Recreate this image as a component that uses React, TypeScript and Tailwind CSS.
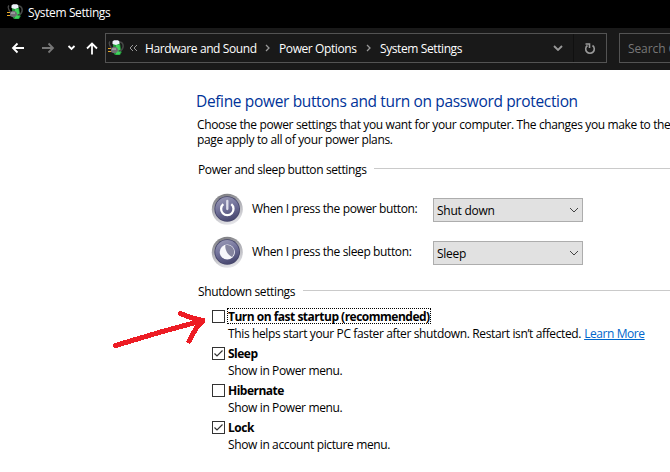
import { useState } from "react";
import clsx from "clsx";

const CRUMBS = [
  { label: "Hardware and Sound", width: "w-[111px]" },
  { label: "Power Options", width: "w-[78px]" },
  { label: "System Settings", width: "w-[84px]" },
];

const SHUTDOWN_OPTIONS = [
  {
    id: "fast",
    label: "Turn on fast startup (recommended)",
    hint: "This helps start your PC faster after shutdown. Restart isn’t affected.",
    link: "Learn More",
  },
  { id: "sleep", label: "Sleep", hint: "Show in Power menu." },
  { id: "hibernate", label: "Hibernate", hint: "Show in Power menu." },
  { id: "lock", label: "Lock", hint: "Show in account picture menu." },
];

function BatteryIcon() {
  return (
    <svg width="16" height="16" viewBox="0 0 16 16" className="shrink-0" aria-hidden>
      <path d="M3.500 8C1 5 .5 3 2 1.500" fill="none" stroke="#4a4a4a" strokeWidth="1.300" />
      <path d="M5 3.500h7l1.500 9-1.500 2.500H7L5.500 13z" fill="#259a3c" />
      <path d="M8 5h3.500l1 7-1 2.500H8z" fill="#3fd45c" />
      <path d="M4.500 1.500 6 .3h4l1.500 1.200v2.300L8 5 4.500 4z" fill="#eef3fb" />
      <path d="M12 2c2.800.5 3.500 3 2.900 5.500-.6 2.300-2 3.500-4.300 3.500" fill="none" stroke="#454846" strokeWidth="1.600" />
      <path d="M3 8.500 5 7h3l2 2v2l-2 2H5l-2-1z" fill="#6f6f72" />
      <path d="M4 8.300h4v1.500H4z" fill="#a5a5a8" />
      <path d="M0 8.500h3M0 11.500h3" stroke="#e9a928" />
    </svg>
  );
}

function Chevron({ className }: { className?: string }) {
  return (
    <svg width="10" height="6" viewBox="0 0 10 6" fill="none" stroke="currentColor" className={className} aria-hidden>
      <path d="m1 1 4 4 4-4" />
    </svg>
  );
}

function RoundButtonIcon({ kind }: { kind: "power" | "sleep" }) {
  return (
    <svg width="32" height="32" viewBox="0 0 32 32" className="shrink-0" aria-hidden>
      <defs>
        <linearGradient id={`rim-${kind}`} x1="0.300" y1="0" x2="0.600" y2="1">
          <stop offset="0" stopColor="#7c7c80" />
          <stop offset="0.450" stopColor="#b0b0b6" />
          <stop offset="1" stopColor="#e6e6ea" />
        </linearGradient>
        <linearGradient id={`face-${kind}`} x1="0.300" y1="0" x2="0.650" y2="1">
          <stop offset="0" stopColor="#9696b4" />
          <stop offset="0.450" stopColor="#72729a" />
          <stop offset="1" stopColor="#46466e" />
        </linearGradient>
      </defs>
      <circle cx="16.300" cy="16.300" r="15.500" fill={`url(#rim-${kind})`} />
      <circle cx="16.200" cy="16" r="12.800" fill="#45456a" />
      <circle cx="16.200" cy="16" r="11.900" fill={`url(#face-${kind})`} />
      {kind === "power" ? (
        <g fill="none" stroke="#fff" strokeWidth="2.300">
          <path d="M12.300 11.200a6.200 6.200 0 1 0 8 0" />
          <path d="M16.300 8v8" stroke="#dedeea" strokeLinecap="round" />
        </g>
      ) : (
        <g>
          <circle cx="16.300" cy="16" r="7.600" fill="#f7f7fb" />
          <path d="M14.300 9.300c5-1.300 9 2.200 8.800 6.700 0 2-.8 3.600-2 4.900-3.500-1.400-7.300-6.400-6.800-11.600z" fill="#85859f" />
        </g>
      )}
    </svg>
  );
}

function SectionTitle({ children, className }: { children: string; className: string }) {
  return (
    <div className="flex h-4 items-center pl-0.5">
      <h2 className={clsx("shrink-0 pt-0.5 whitespace-nowrap", className)}>{children}</h2>
      <div className="h-px flex-1 bg-[#cacaca]" />
    </div>
  );
}

function ActionRow({ kind, label, value }: { kind: "power" | "sleep"; label: string; value: string }) {
  return (
    <div className="flex h-[43px] items-start pl-[15px]">
      <RoundButtonIcon kind={kind} />
      <span className="mt-2 ml-[9px] w-[181px] shrink-0 whitespace-nowrap">{label}</span>
      <button className="mt-[5px] flex h-6 w-[150px] items-center justify-between border border-[#adadad] bg-[#e1e1e1] pr-[3px] pl-[3px] text-left tracking-[-0.25px]">
        <span>{value}</span>
        <Chevron className="text-[#444]" />
      </button>
    </div>
  );
}

export default function App() {
  const [checked, setChecked] = useState<string[]>(["sleep", "lock"]);

  const toggle = (id: string) =>
    setChecked((prev) => (prev.includes(id) ? prev.filter((x) => x !== id) : [...prev, id]));

  return (
    <div className="relative h-[472px] w-[670px] overflow-hidden bg-white font-['Open_Sans',sans-serif] text-[12px] leading-[15px] tracking-[-0.38px] text-black">
      {/* Title bar */}
      <header className="flex h-7 items-start bg-black pt-1 pl-[7px] text-white">
        <BatteryIcon />
        <span className="mt-px ml-[5px]">System Settings</span>
      </header>

      {/* Navigation bar */}
      <nav className="flex h-[42px] items-start bg-[#191919] pt-[5px] text-white">
        <div className="flex h-[30px] w-[105px] shrink-0 items-center">
          <svg width="105" height="30" viewBox="0 0 105 30" fill="none" stroke="#fff" strokeWidth="1.800" aria-hidden>
            <path d="M24 15H13M17.500 10.500 13 15l4.500 4.500" />
            <path d="M42 15h11M48.500 10.500 53 15l-4.500 4.500" stroke="#777" />
            <path d="m68.500 13 3 3 3-3" />
            <path d="M92 21.500V10.500M87 15.500l5-5 5 5" />
          </svg>
        </div>
        <div className="flex h-[30px] w-[502px] shrink-0 items-center border border-[#535353] pl-0.5">
          <BatteryIcon />
          <svg width="9" height="8" viewBox="0 0 9 8" fill="none" stroke="#999" className="ml-[5px]" aria-hidden>
            <path d="M4 1 1 4l3 3M8 1 5 4l3 3" />
          </svg>
          <div className="ml-[7px] flex items-center">
            {CRUMBS.map((crumb, i) => (
              <div key={crumb.label} className="flex items-center">
                {i > 0 && (
                  <svg width="5" height="8" viewBox="0 0 5 8" fill="none" stroke="#999" strokeWidth="1.300" className="mr-[9px] ml-[9px]" aria-hidden>
                    <path d="m1 1 3 3-3 3" />
                  </svg>
                )}
                <span className={clsx("font-medium tracking-[-0.4px] whitespace-nowrap", crumb.width)}>{crumb.label}</span>
              </div>
            ))}
          </div>
          <Chevron className="ml-auto text-[#999] [stroke-width:1.8]" />
          <div className="ml-[10px] flex h-full w-[33px] items-center justify-center border-l border-[#101010]">
            <svg width="12" height="13" viewBox="0 0 12 13" fill="none" stroke="#999" strokeWidth="1.600" aria-hidden>
              <path d="M8.500 3.500a4.300 4.300 0 1 1-5 0M1.500 2h4v4" />
            </svg>
          </div>
        </div>
        <div className="ml-3 flex h-[30px] w-[51px] shrink-0 items-center overflow-hidden border border-r-0 border-[#535353] pl-2 tracking-[-0.1px] whitespace-nowrap text-[#777]">
          Search C
        </div>
      </nav>

      <main className="pt-[21px] pl-[196px]">
        <h1 className="h-5 text-[15.5px] leading-5 tracking-[-0.35px] whitespace-nowrap text-[#003399]">
          Define power buttons and turn on password protection
        </h1>
        <p className="mt-1.5 pl-px tracking-[-0.36px] whitespace-nowrap">
          Choose the power settings that you want for your computer. The changes you make to the
          <br />
          page apply to all of your power plans.
        </p>

        <section className="mt-[13px]">
          <SectionTitle className="w-[176px]">Power and sleep button settings</SectionTitle>
          <div className="mt-[17px]">
            <ActionRow kind="power" label="When I press the power button:" value="Shut down" />
            <ActionRow kind="sleep" label="When I press the sleep button:" value="Sleep" />
          </div>
        </section>

        <section className="mt-[3px]">
          <SectionTitle className="w-[105px]">Shutdown settings</SectionTitle>
          <ul className="mt-[10px] pl-4">
            {SHUTDOWN_OPTIONS.map((option, i) => (
              <li key={option.id} className="h-[37px]">
                <div className="flex h-4 items-center">
                  <button
                    role="checkbox"
                    aria-checked={checked.includes(option.id)}
                    aria-label={option.label}
                    onClick={() => toggle(option.id)}
                    className="size-[13px] shrink-0 border border-[#333] bg-white"
                  >
                    {checked.includes(option.id) && (
                      <svg width="11" height="11" viewBox="0 0 11 11" fill="none" stroke="#333" strokeWidth="1.200" aria-hidden>
                        <path d="M1.500 5.500 4 8l5.500-5.500" />
                      </svg>
                    )}
                  </button>
                  <span
                    className={clsx(
                      "ml-0.5 h-4 border border-dotted leading-4 font-bold tracking-[-0.5px] whitespace-nowrap",
                      i === 0 ? "w-[204px] border-black" : "border-transparent",
                    )}
                  >
                    {option.label}
                  </span>
                </div>
                <p className="mt-0.5 pl-4 tracking-[-0.37px] whitespace-nowrap">
                  {option.hint}
                  {option.link && (
                    <a href="#" className="ml-[3px] tracking-[-0.42px] text-[#0066cc] underline">
                      {option.link}
                    </a>
                  )}
                </p>
              </li>
            ))}
          </ul>
        </section>
      </main>

      {/* Hand-drawn arrow pointing at the fast startup checkbox */}
      <svg
        width="100"
        height="45"
        viewBox="0 0 100 45"
        className="absolute top-[307px] left-[109px]"
        fill="none"
        stroke="#ed1c24"
        strokeWidth="5"
        strokeLinecap="round"
        strokeLinejoin="round"
        shapeRendering="crispEdges"
        aria-hidden
      >
        <path d="M6.500 38.500 50 25.500 94 13.500M71.500 6.500l10 4 12.500 3-7 8-7 12.500" />
      </svg>
    </div>
  );
}
